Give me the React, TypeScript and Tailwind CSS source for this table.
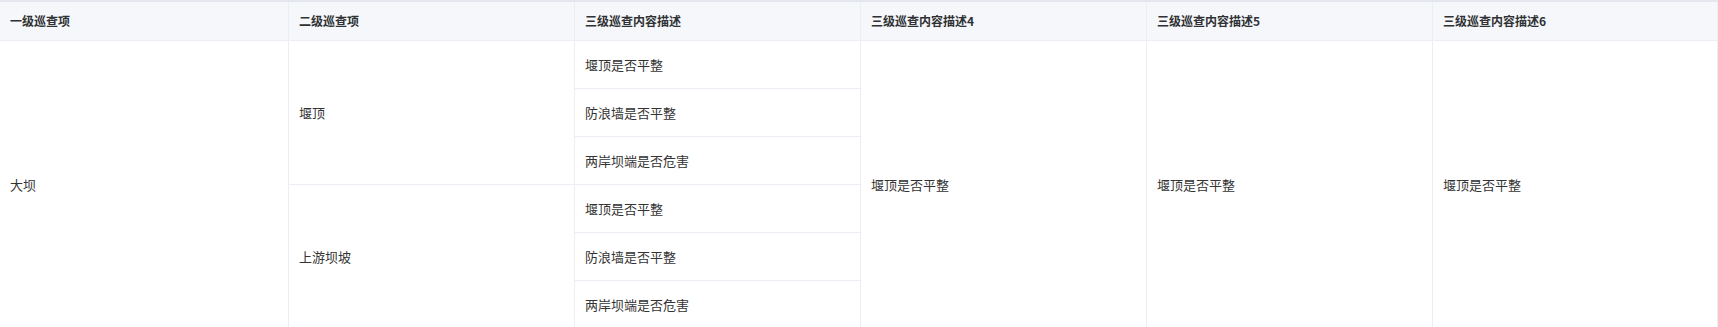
const head = ["一级巡查项", "二级巡查项", "三级巡查内容描述", "三级巡查内容描述4", "三级巡查内容描述5", "三级巡查内容描述6"]

const groups = [
  { name: "堰顶", items: ["堰顶是否平整", "防浪墙是否平整", "两岸坝端是否危害"] },
  { name: "上游坝坡", items: ["堰顶是否平整", "防浪墙是否平整", "两岸坝端是否危害"] },
]

const cell = "flex items-center px-[10px] border-r border-b border-[#ebeef5] bg-white"

export default function App() {
  return (
    <div
      className="w-[1718px] h-[327px] overflow-hidden bg-white border-t-2 border-[#e4e7ed] text-[13px] text-[#333333]"
      style={{ fontFamily: '"Noto Sans CJK SC", "Noto Sans", sans-serif' }}
    >
      <div className="grid grid-cols-[289px_repeat(4,286px)_1fr] grid-rows-[39px_repeat(6,48px)]">
        {head.map((h) => (
          <div key={h} className="flex items-center px-[10px] border-r border-b border-[#ebeef5] bg-[#f5f7fa] text-[12px] font-semibold text-[#303133]">
            {h}
          </div>
        ))}

        <div className={cell + " row-span-6 col-start-1 row-start-2"}>大坝</div>

        {groups.map((g, gi) => (
          <div
            key={g.name}
            className={cell + " row-span-3 col-start-2 " + (gi === 0 ? "row-start-2" : "row-start-5")}
          >
            {g.name}
          </div>
        ))}

        {groups.flatMap((g, gi) =>
          g.items.map((it, i) => (
            <div key={gi + "-" + i} className={cell + " col-start-3"}>
              {it}
            </div>
          ))
        )}

        <div className={cell + " row-span-6 col-start-4 row-start-2"}>堰顶是否平整</div>
        <div className={cell + " row-span-6 col-start-5 row-start-2"}>堰顶是否平整</div>
        <div className={cell + " row-span-6 col-start-6 row-start-2"}>堰顶是否平整</div>
      </div>
    </div>
  )
}
